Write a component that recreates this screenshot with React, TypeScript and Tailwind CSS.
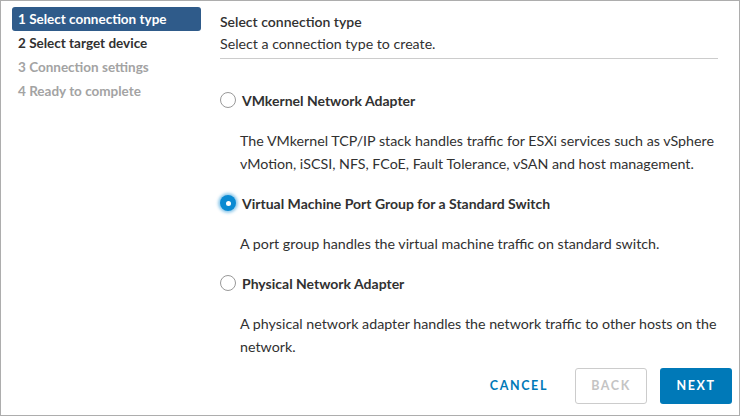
import * as React from 'react'

const steps = [
  { id: 1, name: 'Select connection type', state: 'active' },
  { id: 2, name: 'Select target device', state: 'next' },
  { id: 3, name: 'Connection settings', state: 'disabled' },
  { id: 4, name: 'Ready to complete', state: 'disabled' },
]

const options = [
  {
    id: 'vmkernel',
    label: 'VMkernel Network Adapter',
    description:
      'The VMkernel TCP/IP stack handles traffic for ESXi services such as vSphere vMotion, iSCSI, NFS, FCoE, Fault Tolerance, vSAN and host management.',
  },
  {
    id: 'vmportgroup',
    label: 'Virtual Machine Port Group for a Standard Switch',
    description: 'A port group handles the virtual machine traffic on standard switch.',
  },
  {
    id: 'physical',
    label: 'Physical Network Adapter',
    description:
      'A physical network adapter handles the network traffic to other hosts on the network.',
  },
]

function Radio({ checked }: { checked: boolean }) {
  if (checked) {
    return (
      <span className="flex size-4 shrink-0 items-center justify-center rounded-full bg-[#0a8ad2] shadow-[0_0_3px_2px_rgba(10,138,210,0.45)]">
        <span className="size-[5px] rounded-full bg-white" />
      </span>
    )
  }
  return <span className="size-4 shrink-0 rounded-full border border-[#999999] bg-white" />
}

export default function App() {
  const [selected, setSelected] = React.useState('vmportgroup')

  return (
    <div className="flex h-[416px] w-[740px] border border-[#adadad] bg-white font-['Lato',sans-serif] text-[#313131]">
      <nav className="w-[207px] shrink-0 pl-[11px] pt-[6px]">
        <ol className="flex flex-col">
          {steps.map((step) => (
            <li
              key={step.id}
              className={
                step.state === 'active'
                  ? 'flex h-6 w-[189px] items-center rounded-[3px] bg-[#2f5b8a] px-[6px] text-[13.5px] font-bold text-white'
                  : step.state === 'next'
                    ? 'flex h-6 items-center px-[6px] text-[13.5px] font-bold text-[#313131]'
                    : 'flex h-6 items-center px-[6px] text-[13.5px] font-bold text-[#a3a3a3]'
              }
            >
              {step.id} {step.name}
            </li>
          ))}
        </ol>
      </nav>

      <main className="flex flex-1 flex-col pt-[11px]">
        <div className="mr-[21px] ml-[12px] border-b border-[#cccccc] pb-[4px]">
          <h2 className="text-[14px] leading-5 font-semibold">Select connection type</h2>
          <p className="mt-[2px] text-[14.2px] leading-5">Select a connection type to create.</p>
        </div>

        <div className="mt-[29px] mr-[14px] flex flex-col gap-[16px]">
          {options.map((option) => (
            <div key={option.id} className="flex flex-col">
              <label
                className="flex h-6 cursor-pointer items-center gap-[6px] pl-[12px]"
                onClick={() => setSelected(option.id)}
              >
                <Radio checked={selected === option.id} />
                <span className="text-[14px] font-bold">{option.label}</span>
              </label>
              <p className="mt-[17px] pl-[32px] text-[14.25px] leading-[23px]">
                {option.description}
              </p>
            </div>
          ))}
        </div>

        <div className="mt-auto mr-[7px] mb-[11px] flex items-center justify-end gap-[13px]">
          <button className="h-[36px] px-[14px] text-[12.5px] font-bold tracking-[1.6px] text-[#0079b8]">
            CANCEL
          </button>
          <button
            disabled
            className="h-[36px] w-[72px] rounded-[3px] border border-[#cccccc] text-[12.5px] font-bold tracking-[1.6px] text-[#c4c4c4]"
          >
            BACK
          </button>
          <button className="h-[36px] w-[72px] rounded-[3px] bg-[#0079b8] text-[12.5px] font-bold tracking-[1.6px] text-white">
            NEXT
          </button>
        </div>
      </main>
    </div>
  )
}
